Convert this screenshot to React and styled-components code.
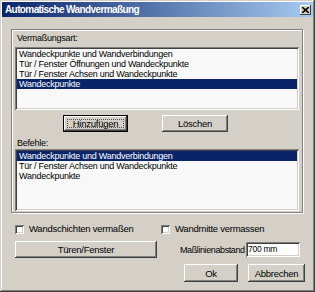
import React from 'react';
import styled, { createGlobalStyle } from 'styled-components';

const GlobalStyle = createGlobalStyle`
  html, body {
    margin: 0;
    padding: 0;
    background: #d4d0c8;
  }
  * {
    box-sizing: border-box;
  }
`;

const Window = styled.div`
  width: 315px;
  height: 292px;
  padding: 2px;
  background: #d4d0c8;
  box-shadow: inset -1px -1px #404040, inset 1px 1px #d4d0c8,
    inset -2px -2px #808080, inset 2px 2px #ffffff;
  font-family: "Liberation Sans", Arial, sans-serif;
  font-size: 9px;
  letter-spacing: -0.25px;
  color: #000;
  display: flex;
  flex-direction: column;
`;

const TitleBar = styled.div`
  height: 15px;
  display: flex;
  align-items: center;
  justify-content: space-between;
  padding: 0 2px 0 3px;
  background: linear-gradient(to right, #0a246a, #a6caf0);
`;

const Title = styled.span`
  color: #fff;
  font-weight: bold;
  font-size: 10px;
  letter-spacing: -0.6px;
`;

const CloseButton = styled.div`
  width: 11px;
  height: 10px;
  display: flex;
  align-items: center;
  justify-content: center;
  background: #d4d0c8;
  box-shadow: inset -1px -1px #404040, inset 1px 1px #fff;
`;

const Body = styled.div`
  flex: 1;
  display: flex;
  flex-direction: column;
  padding: 12px 10px 0 9px;
`;

const Group = styled.div`
  height: 184px;
  border: 1px solid #808080;
  box-shadow: inset 1px 1px #fff, 1px 1px #fff;
  padding: 3px 3px 0 3px;
  display: flex;
  flex-direction: column;
`;

const Label = styled.div`
  height: 10px;
  line-height: 10px;
  padding-left: 2px;
  margin-top: ${p => p.$top || 0}px;
`;

const ListBox = styled.div`
  height: ${p => p.$height}px;
  margin-top: ${p => p.$top}px;
  padding: 2px;
  background: #f8f8f8;
  box-shadow: inset 1px 1px #808080, inset -1px -1px #fff,
    inset 2px 2px #404040, inset -2px -2px #d4d0c8;
`;

const Item = styled.div`
  height: 10px;
  line-height: 10px;
  padding-left: 2px;
  white-space: nowrap;
  background: ${p => (p.$selected ? '#0a246a' : 'transparent')};
  color: ${p => (p.$selected ? '#fff' : '#000')};
`;

const ButtonRow = styled.div`
  display: flex;
  gap: 34px;
  margin-top: 5px;
  padding-left: 48px;
`;

const Button = styled.div`
  position: relative;
  width: ${p => p.$width}px;
  height: ${p => p.$height || 17}px;
  display: flex;
  align-items: center;
  justify-content: center;
  background: #d4d0c8;
  font-size: 9.5px;
  white-space: nowrap;
  box-shadow: inset -1px -1px #404040, inset 1px 1px #fff,
    inset -2px -2px #808080, inset 2px 2px #d4d0c8;
  ${p =>
    p.$default &&
    `
    border: 1px solid #000;
    box-shadow: inset -1px -1px #404040, inset 1px 1px #fff,
      inset -2px -2px #808080;
    &::after {
      content: '';
      position: absolute;
      inset: 3px;
      border: 1px dotted #555;
    }
  `}
`;

const CheckRow = styled.div`
  display: flex;
  margin-top: 11px;
  padding-left: 4px;
`;

const CheckItem = styled.label`
  width: ${p => p.$width}px;
  display: flex;
  align-items: center;
  gap: 5px;
  height: 10px;
  line-height: 10px;
  font-size: 9.5px;
  white-space: nowrap;
`;

const CheckBox = styled.span`
  width: 9px;
  height: 9px;
  background: #fff;
  box-shadow: inset 1px 1px #808080, inset -1px -1px #fff,
    inset 2px 2px #404040, inset -2px -2px #d4d0c8;
`;

const FieldRow = styled.div`
  display: flex;
  align-items: center;
  margin-top: 7px;
  padding-left: 4px;
`;

const FieldLabel = styled.span`
  margin-left: 23px;
  width: 66px;
  font-size: 9px;
  letter-spacing: -0.4px;
  white-space: nowrap;
`;

const TextInput = styled.div`
  width: 54px;
  height: 15px;
  padding: 2px 2px 0;
  line-height: 11px;
  background: #fff;
  font-size: 8.5px;
  box-shadow: inset 1px 1px #808080, inset -1px -1px #fff,
    inset 2px 2px #404040, inset -2px -2px #d4d0c8;
`;

const ActionRow = styled.div`
  display: flex;
  justify-content: flex-end;
  gap: 10px;
  margin-top: 6px;
  margin-right: -2px;
`;

const listA = [
  'Wandeckpunkte und Wandverbindungen',
  'Tür / Fenster Öffnungen und Wandeckpunkte',
  'Tür / Fenster Achsen und Wandeckpunkte',
  'Wandeckpunkte',
];

const listB = [
  'Wandeckpunkte und Wandverbindungen',
  'Tür / Fenster Achsen und Wandeckpunkte',
  'Wandeckpunkte',
];

export default function App() {
  return (
    <>
      <GlobalStyle />
      <Window>
        <TitleBar>
          <Title>Automatische Wandvermaßung</Title>
          <CloseButton>
            <svg width="7" height="6" viewBox="0 0 7 6">
              <path d="M0 0 L7 6 M7 0 L0 6" stroke="#000" strokeWidth="1.6" />
            </svg>
          </CloseButton>
        </TitleBar>
        <Body>
          <Group>
            <Label>Vermaßungsart:</Label>
            <ListBox $height={63} $top={4}>
              {listA.map((t, i) => (
                <Item key={t} $selected={i === 3}>{t}</Item>
              ))}
            </ListBox>
            <ButtonRow>
              <Button $width={65} $default>Hinzufügen</Button>
              <Button $width={66}>Löschen</Button>
            </ButtonRow>
            <Label $top={6}>Befehle:</Label>
            <ListBox $height={62} $top={1}>
              {listB.map((t, i) => (
                <Item key={t} $selected={i === 0}>{t}</Item>
              ))}
            </ListBox>
          </Group>
          <CheckRow>
            <CheckItem $width={146}>
              <CheckBox />
              Wandschichten vermaßen
            </CheckItem>
            <CheckItem $width={120}>
              <CheckBox />
              Wandmitte vermassen
            </CheckItem>
          </CheckRow>
          <FieldRow>
            <Button $width={142}>Türen/Fenster</Button>
            <FieldLabel>Maßlinienabstand</FieldLabel>
            <TextInput>700 mm</TextInput>
          </FieldRow>
          <ActionRow>
            <Button $width={54} $height={18}>Ok</Button>
            <Button $width={57} $height={18}>Abbrechen</Button>
          </ActionRow>
        </Body>
      </Window>
    </>
  );
}
